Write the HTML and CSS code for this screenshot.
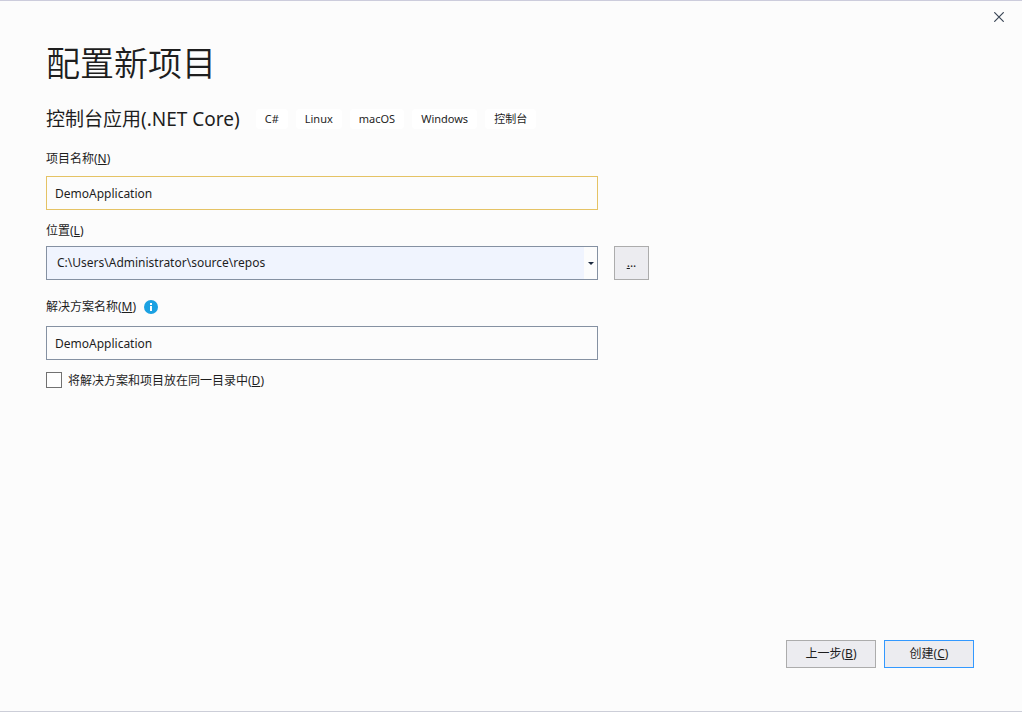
FILE: index.html
```html
<!DOCTYPE html>
<html lang="zh-CN">
<head>
<meta charset="utf-8">
<meta name="viewport" content="width=device-width, initial-scale=1">
<title>配置新项目</title>
<link rel="stylesheet" href="styles.css">
</head>
<body>
<div class="dialog">
  <header class="titlebar">
    <button class="close" type="button" aria-label="关闭">
      <svg width="10" height="10" viewBox="0 0 10 10" aria-hidden="true"><path d="M0.3 0.3 9.7 9.7M9.7 0.3 0.3 9.7"/></svg>
    </button>
  </header>
  <form class="content">
    <h1 class="title">配置新项目</h1>
    <div class="template">
      <h2 class="template-name">控制台应用(.NET Core)</h2>
      <ul class="tags">
        <li class="tag">C#</li>
        <li class="tag">Linux</li>
        <li class="tag">macOS</li>
        <li class="tag">Windows</li>
        <li class="tag">控制台</li>
      </ul>
    </div>
    <div class="field">
      <label class="label" for="project">项目名称(<u>N</u>)</label>
      <input class="textbox textbox-active" id="project" type="text" value="DemoApplication">
    </div>
    <div class="field field-location">
      <label class="label" for="location">位置(<u>L</u>)</label>
      <div class="location">
        <div class="combo">
          <select class="combo-select" id="location"><option>C:\Users\Administrator\source\repos</option></select>
          <span class="combo-arrow"><svg width="6" height="3" viewBox="0 0 6 3" aria-hidden="true"><path d="M0 0H6L3 3Z"/></svg></span>
        </div>
        <button class="button browse" type="button" aria-label="浏览"><u>.</u>..</button>
      </div>
    </div>
    <div class="field field-solution">
      <div class="label-row">
        <label class="label" for="solution">解决方案名称(<u>M</u>)</label>
        <svg class="info" width="14" height="14" viewBox="0 0 14 14" aria-hidden="true"><circle cx="7" cy="7" r="7"/><path d="M6 3H8V5H6ZM6 6H8V11H6Z"/></svg>
      </div>
      <input class="textbox" id="solution" type="text" value="DemoApplication">
    </div>
    <label class="check"><input class="checkbox" type="checkbox"><span>将解决方案和项目放在同一目录中(<u>D</u>)</span></label>
    <footer class="actions">
      <button class="button" type="button">上一步(<u>B</u>)</button>
      <button class="button button-primary" type="submit">创建(<u>C</u>)</button>
    </footer>
  </form>
</div>
</body>
</html>
```
FILE: styles.css
```css
* {
  box-sizing: border-box;
}

body {
  margin: 0;
  background: #fcfcfc;
  color: #1e1e1e;
  font: 12px/18px "Noto Sans", "Noto Sans CJK SC", sans-serif;
}

.dialog {
  display: flex;
  flex-direction: column;
  min-height: 100vh;
  border-top: 1px solid #ccccdc;
  border-bottom: 1px solid #ccced8;
}

.titlebar {
  display: flex;
  justify-content: flex-end;
  padding: 4px 11px 0 0;
}

.close {
  display: grid;
  place-items: center;
  width: 24px;
  height: 24px;
  padding: 0;
  border: 0;
  background: none;
}

.close path {
  fill: none;
  stroke: #3b4656;
  stroke-width: 1.2;
}

.content {
  display: flex;
  flex: 1;
  flex-direction: column;
  padding: 8px 48px 43px 46px;
}

.title {
  margin: 0;
  font-family: "Noto Sans CJK SC", sans-serif;
  font-size: 34px;
  font-weight: 350;
  line-height: 50px;
}

.template {
  display: flex;
  align-items: center;
  gap: 16px;
  margin: 18px 0 17px;
}

.template-name {
  margin: 0;
  font-size: 19px;
  font-weight: 400;
  line-height: 28px;
}

.tags {
  display: flex;
  gap: 8px;
  margin: 0;
  padding: 0;
  list-style: none;
}

.tag {
  padding: 1px 9px;
  border-radius: 4px;
  background: #fff;
  font-size: 11px;
}

.field {
  display: flex;
  flex-direction: column;
  gap: 8px;
  max-width: 552px;
  margin-bottom: 12px;
}

.field-location {
  gap: 6px;
  max-width: 603px;
  margin-bottom: 18px;
}

.field-solution {
  gap: 10px;
}

.label-row {
  display: flex;
  align-items: center;
  gap: 8px;
}

.info {
  fill: #1ba1e2;
}

.info path {
  fill: #fff;
}

.textbox,
.combo-select {
  width: 100%;
  height: 34px;
  border: 1px solid #8591a2;
  border-radius: 0;
  outline: 0;
  background: #fcfcfc;
  color: #1e1e1e;
  font: 12px/18px "Noto Sans", "Noto Sans CJK SC", sans-serif;
}

.textbox {
  padding: 0 8px;
}

.textbox-active {
  border-color: #e5c365;
}

.location {
  display: flex;
  gap: 16px;
}

.combo {
  position: relative;
  flex: 1;
}

.combo-select {
  display: block;
  padding: 0 24px 0 10px;
  background: #f0f4fe;
  appearance: none;
}

.combo-arrow {
  position: absolute;
  top: 1px;
  right: 1px;
  bottom: 1px;
  display: grid;
  place-items: center;
  width: 13px;
  background: #fcfcfc;
  pointer-events: none;
}

.combo-arrow path {
  fill: #1b293e;
}

.button {
  width: 90px;
  height: 28px;
  padding: 0;
  border: 1px solid #acacac;
  background: #ececf0;
  color: #1e1e1e;
  font: inherit;
}

.button-primary {
  border-color: #3399ff;
}

.browse {
  width: 35px;
  height: 34px;
}

.check {
  display: flex;
  align-items: flex-start;
  align-self: flex-start;
  gap: 6px;
}

.checkbox {
  width: 16px;
  height: 16px;
  margin: 0;
  border: 1px solid #717171;
  background: #fefefe;
  appearance: none;
}

.checkbox:checked {
  background: #717171;
}

.actions {
  display: flex;
  justify-content: flex-end;
  gap: 8px;
  margin-top: auto;
}
```
